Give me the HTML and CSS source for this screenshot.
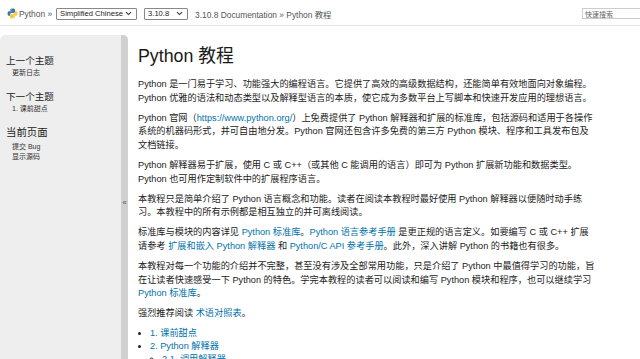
FILE: index.html
```html
<!DOCTYPE html>
<html lang="zh-CN">
<head>
<meta charset="utf-8">
<title>Python 教程</title>
<link rel="stylesheet" href="styles.css">
</head>
<body>
<div class="topbar">
  <svg class="logo" width="11" height="11" viewBox="0 0 11 11">
    <path d="M5.4 0.5C3.3 0.5 3.4 1.4 3.4 1.4V2.9H5.5V3.3H2.4C2.4 3.3 0.5 3.1 0.5 5.5C0.5 7.9 2.1 7.8 2.1 7.8H3.1V6.4C3.1 6.4 3 4.9 4.6 4.9H6.7C6.7 4.9 8.1 4.9 8.1 3.5V1.9C8.1 1.9 8.3 0.5 5.4 0.5Z" fill="#3a74a8"/>
    <circle cx="4.3" cy="1.6" r="0.45" fill="#fff"/>
    <path d="M5.6 10.5C7.7 10.5 7.6 9.6 7.6 9.6V8.1H5.5V7.7H8.6C8.6 7.7 10.5 7.9 10.5 5.5C10.5 3.1 8.9 3.2 8.9 3.2H7.9V4.6C7.9 4.6 8 6.1 6.4 6.1H4.3C4.3 6.1 2.9 6.1 2.9 7.5V9.1C2.9 9.1 2.7 10.5 5.6 10.5Z" fill="#f7c83a"/>
    <circle cx="6.7" cy="9.4" r="0.45" fill="#fff"/>
  </svg>
  <span class="crumb">Python »</span>
  <label class="sel sel-lang">
    <select><option>Simplified Chinese</option></select>
    <svg class="chev" width="7" height="5" viewBox="0 0 7 5"><path d="M1 1.2L3.5 3.6L6 1.2" fill="none" stroke="#333" stroke-width="1.1"/></svg>
  </label>
  <label class="sel sel-ver">
    <select><option>3.10.8</option></select>
    <svg class="chev" width="7" height="5" viewBox="0 0 7 5"><path d="M1 1.2L3.5 3.6L6 1.2" fill="none" stroke="#333" stroke-width="1.1"/></svg>
  </label>
  <span class="crumb">3.10.8 Documentation » Python 教程</span>
  <span class="spacer"></span>
  <input class="search" type="text" placeholder="快速搜索">
</div>
<div class="document">
  <aside class="sidebar">
    <h3 class="side-title">上一个主题</h3>
    <p class="side-link">更新日志</p>
    <h3 class="side-title">下一个主题</h3>
    <p class="side-link">1. 课前甜点</p>
    <h3 class="side-title side-big">当前页面</h3>
    <p class="side-link side-tight">提交 Bug</p>
    <p class="side-link side-tight">显示源码</p>
  </aside>
  <div class="collapse">«</div>
  <main class="main">
    <h1 class="title">Python 教程</h1>
    <p>Python 是一门易于学习、功能强大的编程语言。它提供了高效的高级数据结构，还能简单有效地面向对象编程。<br>Python 优雅的语法和动态类型以及解释型语言的本质，使它成为多数平台上写脚本和快速开发应用的理想语言。</p>
    <p>Python 官网（<a href="#">https://www.python.org/</a>）上免费提供了 Python 解释器和扩展的标准库，包括源码和适用于各操作<br>系统的机器码形式，并可自由地分发。Python 官网还包含许多免费的第三方 Python 模块、程序和工具发布包及<br>文档链接。</p>
    <p>Python 解释器易于扩展，使用 C 或 C++（或其他 C 能调用的语言）即可为 Python 扩展新功能和数据类型。<br>Python 也可用作定制软件中的扩展程序语言。</p>
    <p>本教程只是简单介绍了 Python 语言概念和功能。读者在阅读本教程时最好使用 Python 解释器以便随时动手练<br>习。本教程中的所有示例都是相互独立的并可离线阅读。</p>
    <p>标准库与模块的内容详见 <a href="#">Python 标准库</a>。<a href="#">Python 语言参考手册</a> 是更正规的语言定义。如要编写 C 或 C++ 扩展<br>请参考 <a href="#">扩展和嵌入 Python 解释器</a> 和 <a href="#">Python/C API 参考手册</a>。此外，深入讲解 Python 的书籍也有很多。</p>
    <p>本教程对每一个功能的介绍并不完整，甚至没有涉及全部常用功能，只是介绍了 Python 中最值得学习的功能，旨<br>在让读者快速感受一下 Python 的特色。学完本教程的读者可以阅读和编写 Python 模块和程序，也可以继续学习<br><a href="#">Python 标准库</a>。</p>
    <p>强烈推荐阅读 <a href="#">术语对照表</a>。</p>
    <ul class="toc">
      <li><a href="#">1. 课前甜点</a></li>
      <li><a href="#">2. Python 解释器</a>
        <ul class="toc-sub">
          <li><a href="#">2.1. 调用解释器</a></li>
        </ul>
      </li>
    </ul>
  </main>
</div>
</body>
</html>
```
FILE: styles.css
```css
html, body {
  margin: 0;
  padding: 0;
  height: 100%;
  overflow: hidden;
  background: #fff;
}
body {
  font-family: "Liberation Sans", "Noto Sans CJK SC", sans-serif;
  color: #222;
  display: flex;
  flex-direction: column;
}
.topbar {
  height: 26px;
  flex: none;
  display: flex;
  align-items: center;
  border-bottom: 1px solid #e3e3e3;
  padding: 2px 0 0 7px;
  box-sizing: border-box;
  font-size: 8.4px;
  color: #555;
}
.logo {
  flex: none;
  margin-right: 1px;
}
.crumb {
  white-space: nowrap;
}
.sel {
  display: flex;
  align-items: center;
  height: 12px;
  border: 1px solid #888;
  border-radius: 1px;
  background: #fff;
  box-sizing: border-box;
  padding: 0 4px 0 0;
}
.sel select {
  appearance: none;
  -webkit-appearance: none;
  border: none;
  background: transparent;
  font-family: "Liberation Sans", sans-serif;
  font-size: 7.6px;
  line-height: 10px;
  height: 10px;
  padding: 0 0 0 3px;
  margin: 0;
  color: #222;
  flex: 1;
  min-width: 0;
  outline: none;
}
.chev { flex: none; }
.sel-lang { width: 81px; margin-left: 4px; }
.sel-ver { width: 44px; margin-left: 7px; margin-right: 7px; }
.spacer { flex: 1; }
.search {
  width: 60px;
  height: 11px;
  box-sizing: border-box;
  border: 1px solid #ccc;
  font-size: 7px;
  padding: 0 2px;
  margin-right: -2px;
  font-family: "Noto Sans CJK SC", sans-serif;
}
.search::placeholder { color: #666; }
.document {
  flex: 1;
  display: flex;
  margin-top: 9px;
  min-height: 0;
}
.sidebar {
  width: 121px;
  flex: none;
  background: #eeeeee;
  border-radius: 5px 0 0 0;
  padding: 19px 0 0 6px;
  box-sizing: border-box;
}
.side-title {
  margin: 0;
  font-weight: normal;
  font-size: 9.6px;
  line-height: 14px;
  color: #222;
}
.side-big {
  font-size: 10.4px;
}
.side-link {
  margin: 0 0 12px 6px;
  font-size: 7px;
  line-height: 10px;
  color: #333;
}
.side-tight {
  margin-bottom: 0;
}
.side-big + .side-link { margin-top: 2px; }
.collapse {
  width: 7px;
  flex: none;
  background: #d0d0d0;
  border-radius: 0 5px 0 0;
  font-size: 8px;
  color: #555;
  text-align: center;
  padding-top: 163px;
  box-sizing: border-box;
  line-height: 10px;
}
.main {
  flex: 1;
  padding: 0 0 0 10px;
  min-width: 0;
}
.title {
  margin: 10px 0 11px;
  font-weight: normal;
  font-size: 17.8px;
  line-height: 22px;
  color: #1a1a1a;
}
.main p {
  margin: 0 0 6.5px;
  font-size: 9.2px;
  line-height: 13.6px;
  white-space: nowrap;
}
.main a {
  color: #0072aa;
  text-decoration: none;
}
.toc {
  margin: 0;
  padding: 0 0 0 12px;
  font-size: 9.2px;
  line-height: 12.6px;
  list-style: disc;
}
.toc-sub {
  margin: 0;
  padding: 0 0 0 12px;
  list-style: circle;
}
```
